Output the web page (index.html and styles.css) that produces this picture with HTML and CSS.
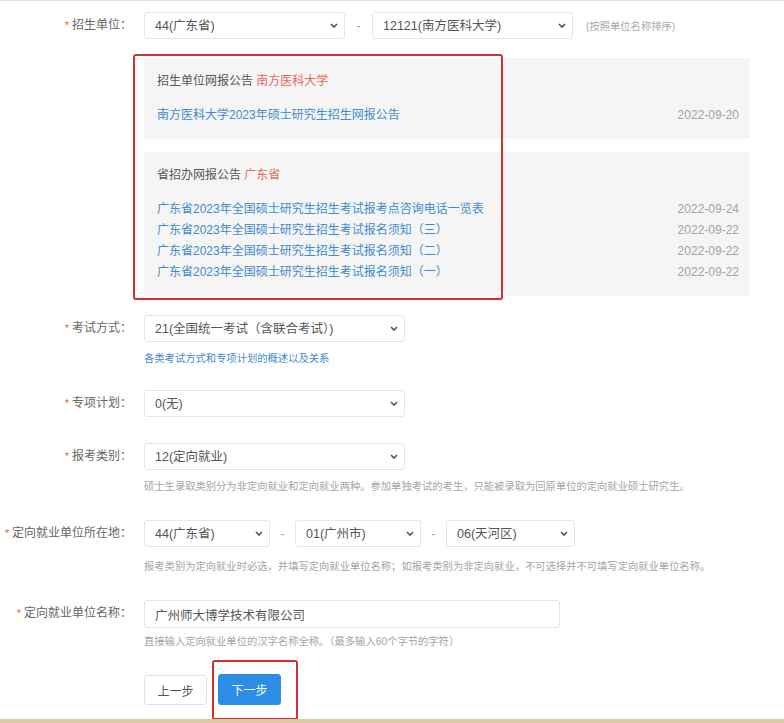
FILE: index.html
```html
<!DOCTYPE html>
<html lang="zh-CN">
<head>
    <meta charset="UTF-8">
    <meta name="viewport" content="width=device-width, initial-scale=1.0">
    <title>网上报名 - 报考信息</title>
    <link rel="stylesheet" href="styles.css">
</head>
<body>
    <div class="page">
        <form class="apply-form">
            <!-- 招生单位 -->
            <div class="row">
                <label class="row-label"><i>*</i>招生单位：</label>
                <div class="row-field">
                    <div class="line">
                        <span class="select w-unit">
                            <select><option>44(广东省)</option></select>
                            <svg class="caret" viewBox="0 0 8 5" width="8" height="5"><path d="M1 1l3 3 3-3" /></svg>
                        </span>
                        <span class="dash">-</span>
                        <span class="select w-unit">
                            <select><option>12121(南方医科大学)</option></select>
                            <svg class="caret" viewBox="0 0 8 5" width="8" height="5"><path d="M1 1l3 3 3-3" /></svg>
                        </span>
                        <span class="hint">(按照单位名称排序)</span>
                    </div>

                    <div class="notices">
                        <div class="notice-block">
                            <div class="notice-title">招生单位网报公告 <span class="hl">南方医科大学</span></div>
                            <ul class="notice-list first">
                                <li><a href="#">南方医科大学2023年硕士研究生招生网报公告</a><span class="date">2022-09-20</span></li>
                            </ul>
                        </div>
                        <div class="notice-block">
                            <div class="notice-title">省招办网报公告 <span class="hl">广东省</span></div>
                            <ul class="notice-list">
                                <li><a href="#">广东省2023年全国硕士研究生招生考试报考点咨询电话一览表</a><span class="date">2022-09-24</span></li>
                                <li><a href="#">广东省2023年全国硕士研究生招生考试报名须知（三）</a><span class="date">2022-09-22</span></li>
                                <li><a href="#">广东省2023年全国硕士研究生招生考试报名须知（二）</a><span class="date">2022-09-22</span></li>
                                <li><a href="#">广东省2023年全国硕士研究生招生考试报名须知（一）</a><span class="date">2022-09-22</span></li>
                            </ul>
                        </div>
                    </div>
                </div>
            </div>

            <!-- 考试方式 -->
            <div class="row row-close">
                <label class="row-label"><i>*</i>考试方式：</label>
                <div class="row-field">
                    <span class="select w-wide">
                        <select><option>21(全国统一考试（含联合考试）)</option></select>
                        <svg class="caret" viewBox="0 0 8 5" width="8" height="5"><path d="M1 1l3 3 3-3" /></svg>
                    </span>
                    <a class="note note-link" href="#">各类考试方式和专项计划的概述以及关系</a>
                </div>
            </div>

            <!-- 专项计划 -->
            <div class="row row-mid">
                <label class="row-label"><i>*</i>专项计划：</label>
                <div class="row-field">
                    <span class="select w-wide">
                        <select><option>0(无)</option></select>
                        <svg class="caret" viewBox="0 0 8 5" width="8" height="5"><path d="M1 1l3 3 3-3" /></svg>
                    </span>
                </div>
            </div>

            <!-- 报考类别 -->
            <div class="row">
                <label class="row-label"><i>*</i>报考类别：</label>
                <div class="row-field">
                    <span class="select w-wide">
                        <select><option>12(定向就业)</option></select>
                        <svg class="caret" viewBox="0 0 8 5" width="8" height="5"><path d="M1 1l3 3 3-3" /></svg>
                    </span>
                    <p class="note">硕士生录取类别分为非定向就业和定向就业两种。参加单独考试的考生，只能被录取为回原单位的定向就业硕士研究生。</p>
                </div>
            </div>

            <!-- 定向就业单位所在地 -->
            <div class="row">
                <label class="row-label"><i>*</i>定向就业单位所在地：</label>
                <div class="row-field">
                    <div class="line">
                        <span class="select w-area">
                            <select><option>44(广东省)</option></select>
                            <svg class="caret" viewBox="0 0 8 5" width="8" height="5"><path d="M1 1l3 3 3-3" /></svg>
                        </span>
                        <span class="dash">-</span>
                        <span class="select w-area">
                            <select><option>01(广州市)</option></select>
                            <svg class="caret" viewBox="0 0 8 5" width="8" height="5"><path d="M1 1l3 3 3-3" /></svg>
                        </span>
                        <span class="dash">-</span>
                        <span class="select w-area last">
                            <select><option>06(天河区)</option></select>
                            <svg class="caret" viewBox="0 0 8 5" width="8" height="5"><path d="M1 1l3 3 3-3" /></svg>
                        </span>
                    </div>
                    <p class="note note-loose">报考类别为定向就业时必选，并填写定向就业单位名称；如报考类别为非定向就业，不可选择并不可填写定向就业单位名称。</p>
                </div>
            </div>

            <!-- 定向就业单位名称 -->
            <div class="row">
                <label class="row-label"><i>*</i>定向就业单位名称：</label>
                <div class="row-field">
                    <input type="text" class="text-input" value="广州师大博学技术有限公司">
                    <p class="note note-tight">直接输入定向就业单位的汉字名称全称。（最多输入60个字节的字符）</p>
                </div>
            </div>

            <div class="row actions">
                <span class="row-label"></span>
                <div class="row-field line">
                    <button type="button" class="btn">上一步</button>
                    <button type="button" class="btn btn-primary">下一步</button>
                </div>
            </div>
        </form>

        <!-- red annotation frames -->
        <div class="mark mark-notices"></div>
        <div class="mark mark-next"></div>
    </div>
</body>
</html>
```

FILE: styles.css
```css
/* Base */
body {
    margin: 0;
    background: #fff;
    color: #555;
    font-family: "Liberation Sans", "Noto Sans CJK SC", sans-serif;
    font-size: 12px;
}
.page {
    position: relative;
    height: 723px;
    box-sizing: border-box;
    border-top: 1px solid #ede3d3;
    border-bottom: 4px solid #ddc7a6;
    overflow: hidden;
}
.apply-form {
    padding-top: 11px;
}

/* Rows */
.row {
    display: flex;
    align-items: flex-start;
}
.row + .row {
    margin-top: 26px;
}
.row.row-close {
    margin-top: 19px;
}
.row.row-mid {
    margin-top: 24px;
}
.row-label {
    width: 132px;
    flex-shrink: 0;
    margin-right: 12px;
    line-height: 27px;
    text-align: right;
    color: #666;
    white-space: nowrap;
}
.row-label i {
    font-style: normal;
    color: #df6a3a;
    margin-right: 3px;
    font-size: 11px;
}
.row-field {
    flex: 1;
}
.line {
    display: flex;
    align-items: center;
}

/* Selects */
.select {
    position: relative;
    display: inline-block;
    height: 27px;
}
.select select {
    appearance: none;
    -webkit-appearance: none;
    width: 100%;
    height: 27px;
    box-sizing: border-box;
    border: 1px solid #e6e6e6;
    border-radius: 3px;
    background: #fff;
    padding: 0 20px 0 10px;
    font-family: inherit;
    font-size: 12.5px;
    color: #555;
    outline: none;
}
.select .caret {
    position: absolute;
    right: 7px;
    top: 11px;
    pointer-events: none;
}
.caret path {
    fill: none;
    stroke: #555;
    stroke-width: 1.7;
}
.w-unit {
    width: 201px;
}
.w-wide {
    width: 261px;
}
.w-area {
    width: 126px;
}
.w-area.last {
    width: 129px;
}
.dash {
    width: 27px;
    text-align: center;
    color: #999;
}
.w-area + .dash {
    width: 25px;
}
.hint {
    margin-left: 13px;
    font-size: 10.3px;
    color: #aaa;
}

/* Notices */
.notices {
    width: 606px;
    margin-top: 19px;
}
.notice-block {
    background: #f5f5f5;
    padding: 13px 11px 13px 13px;
}
.notice-block + .notice-block {
    margin-top: 13px;
}
.notice-title {
    line-height: 20px;
    color: #555;
    margin-bottom: 14px;
}
.notice-title .hl {
    color: #e8695c;
}
.notice-list {
    list-style: none;
    margin: 0;
    padding: 0;
}
.notice-list li {
    display: flex;
    justify-content: space-between;
    line-height: 21px;
}
.notice-list a {
    color: #3f8bcd;
    text-decoration: none;
}
.notice-list .date {
    color: #a3a3a3;
}

/* Notes */
.note {
    display: block;
    margin: 10px 0 0;
    font-size: 10.3px;
    line-height: 14px;
    color: #a5a5a5;
    white-space: nowrap;
}
.note-link {
    color: #3f8bcd;
    text-decoration: none;
}
.note-loose {
    margin-top: 13px;
}
.note-tight {
    margin-top: 7px;
}

/* Text input */
.text-input {
    display: block;
    width: 416px;
    height: 28px;
    box-sizing: border-box;
    border: 1px solid #e6e6e6;
    border-radius: 3px;
    padding: 0 10px;
    font-family: inherit;
    font-size: 12.5px;
    color: #555;
    outline: none;
}

/* Buttons */
.actions .line {
    gap: 11px;
}
.btn {
    width: 63px;
    height: 30px;
    border: 1px solid #e2e2e2;
    border-radius: 3px;
    background: #fff;
    color: #555;
    font-family: inherit;
    font-size: 12px;
    cursor: pointer;
}
.btn-primary {
    height: 31px;
    margin-top: -1px;
    border-color: #2b8de6;
    background: #2b8de6;
    color: #fff;
}

/* Annotation frames drawn over the form */
.mark {
    position: absolute;
    border: 2.5px solid #d2302c;
    border-radius: 3px;
}
.mark-notices {
    left: 133px;
    top: 53px;
    width: 366px;
    height: 242px;
}
.mark-next {
    left: 212px;
    top: 659px;
    width: 82px;
    height: 56px;
}
```
